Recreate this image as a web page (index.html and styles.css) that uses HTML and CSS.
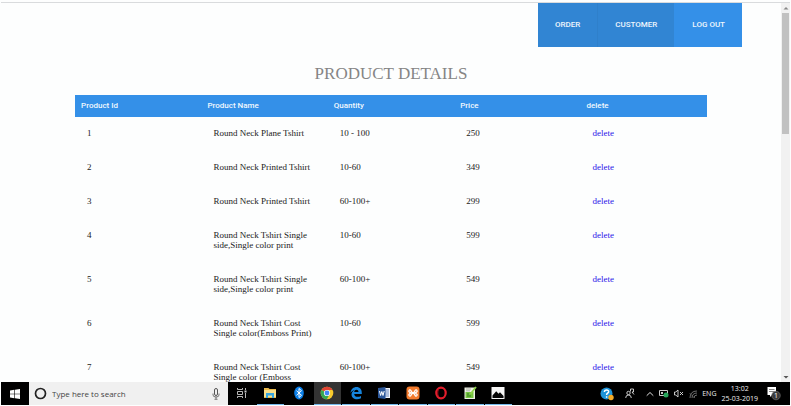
FILE: index.html
```html
<!DOCTYPE html>
<html lang="en">
<head>
<meta charset="utf-8">
<title>Product Details</title>
<link rel="stylesheet" href="styles.css">
</head>
<body>
<div class="window">
  <main class="page">
    <nav class="nav">
      <a class="nav-link" href="#order">ORDER</a>
      <a class="nav-link" href="#customer">CUSTOMER</a>
      <a class="nav-link nav-active" href="#logout">LOG OUT</a>
    </nav>
    <h1 class="title">PRODUCT DETAILS</h1>
    <table class="products">
      <thead>
        <tr><th>Product Id</th><th>Product Name</th><th>Quantity</th><th>Price</th><th>delete</th></tr>
      </thead>
      <tbody>
        <tr><td>1</td><td>Round Neck Plane Tshirt</td><td>10 - 100</td><td>250</td><td><a href="#d1">delete</a></td></tr>
        <tr><td>2</td><td>Round Neck Printed Tshirt</td><td>10-60</td><td>349</td><td><a href="#d2">delete</a></td></tr>
        <tr><td>3</td><td>Round Neck Printed Tshirt</td><td>60-100+</td><td>299</td><td><a href="#d3">delete</a></td></tr>
        <tr><td>4</td><td>Round Neck Tshirt Single<br>side,Single color print</td><td>10-60</td><td>599</td><td><a href="#d4">delete</a></td></tr>
        <tr><td>5</td><td>Round Neck Tshirt Single<br>side,Single color print</td><td>60-100+</td><td>549</td><td><a href="#d5">delete</a></td></tr>
        <tr><td>6</td><td>Round Neck Tshirt Cost<br>Single color(Emboss Print)</td><td>10-60</td><td>599</td><td><a href="#d6">delete</a></td></tr>
        <tr><td>7</td><td>Round Neck Tshirt Cost<br>Single color (Emboss</td><td>60-100+</td><td>549</td><td><a href="#d7">delete</a></td></tr>
      </tbody>
    </table>
  </main>
  <div class="scrollbar" aria-hidden="true">
    <svg class="arrow" viewBox="0 0 8 8"><path d="M1.5 5.5 4 3l2.500 2.500z" fill="#888"/></svg>
    <div class="thumb"></div>
    <svg class="arrow arrow-down" viewBox="0 0 8 8"><path d="M1.500 3 4 5.500 6.500 3z" fill="#555"/></svg>
  </div>
</div>
<footer class="taskbar">
  <button class="start" aria-label="Start"><svg width="10" height="10" viewBox="0 0 10 10"><path d="M0 1.400 4.400.8v3.900H0zM5 .7 10 0v4.700H5zM0 5.300h4.400v3.900L0 8.600zM5 5.300h5V10l-5-.7z" fill="#fff"/></svg></button>
  <div class="search">
    <svg width="13" height="13" viewBox="0 0 13 13"><circle cx="6.500" cy="6.500" r="5" fill="none" stroke="#222" stroke-width="1.700"/></svg>
    <input class="search-input" type="text" aria-label="Search" placeholder="Type here to search">
    <svg width="8" height="12" viewBox="0 0 8 12" fill="none" stroke="#555"><rect x="2.500" y=".5" width="3" height="7" rx="1.500"/><path d="M1 5.500v1.500q0 2 3 2t3-2V5.500M4 9v2M2.500 11.300h3" stroke-width=".8"/></svg>
  </div>
  <div class="apps">
    <button class="app" aria-label="Task view"><svg viewBox="0 0 14 14" fill="none" stroke="#ccc"><path d="M2.500 2v1.500h5V2M2.500 12v-1.500h5V12M2.500 5.500h5v3h-5zM10.500 2v2M10.500 7v5" stroke-width=".9"/><path d="M9.500 4.500h2v2h-2z" fill="#ccc" stroke="none"/></svg></button>
    <button class="app open" aria-label="File Explorer"><svg viewBox="0 0 14 14"><path d="M1 2h4.500l1 1H13v9H1z" fill="#e9b94b"/><path d="M1 4h12v7H1z" fill="#fbe08a"/><path d="M3 7h8v5H9V9.500H5V12H3z" fill="#39a6e0"/></svg></button>
    <button class="app" aria-label="Bluetooth"><svg viewBox="0 0 14 14"><ellipse cx="7" cy="7" rx="4.800" ry="6.500" fill="#0b7fe8"/><path d="m4.500 4.700 5 4.600L7 11.500v-9l2.500 2.200-5 4.600" fill="none" stroke="#fff"/></svg></button>
    <button class="app open current" aria-label="Chrome"><svg viewBox="0 0 14 14"><circle cx="7" cy="7" r="6.300" fill="#f7ca2d"/><path d="M7 7 1.500 3.900A6.300 6.300 0 0 1 12.500 4H7z" fill="#e14435"/><path d="M7 7 1.500 3.900A6.300 6.300 0 0 0 6.800 13.300L9.600 8.500z" fill="#36a853"/><circle cx="7" cy="7" r="3.100" fill="#fff"/><circle cx="7" cy="7" r="2.400" fill="#4286f5"/></svg></button>
    <button class="app open" aria-label="Edge"><svg viewBox="0 0 14 14"><path d="M1.500 7C2 3 4.500 1 7.500 1c3.600 0 5.500 2.500 5.300 6.900H5.200c.2 3.400 4.200 3.600 6.800 2v2.400C7.500 14.500 2.500 12.800 2.500 8.500c0-2 1.200-3.500 3-4.300C3.500 4.400 2.300 5.500 1.500 7zm3.700-1h4.300c0-3.200-4-3-4.300 0z" fill="#1684dc"/></svg></button>
    <button class="app open" aria-label="Word"><svg viewBox="0 0 14 14"><path d="M7 2h6v10H7z" fill="#f2f5fb"/><path d="M8 4h4M8 6h4M8 8h4M8 10h4" stroke="#315da8" stroke-width=".7"/><path d="m1 2 7.500-1v12L1 12z" fill="#2b579a"/><path d="m2.500 5 1.100 4.500L4.800 5.500 6 9.500 7.200 5" fill="none" stroke="#fff"/></svg></button>
    <button class="app open" aria-label="XAMPP"><svg viewBox="0 0 14 14"><rect x=".5" y=".5" width="13" height="13" rx="3" fill="#f37b2d"/><path d="M3 4.500c1-1.500 2 0 2.500 1.200L7 7l1.500-1.300C9 4.500 10 3 11 4.500S9 7 9 7s3 1 2 2.500-2 0-2.500-1.200L7 7 5.500 8.300C5 9.500 4 11 3 9.500S5 7 5 7 2 6 3 4.500z" fill="none" stroke="#fff" stroke-width="1.300"/></svg></button>
    <button class="app open" aria-label="Opera"><svg viewBox="0 0 14 14"><ellipse cx="7" cy="7" rx="4.700" ry="5.300" fill="none" stroke="#e21d2b" stroke-width="2.200"/><path d="M4.500 3.500C3.500 5 3.500 9 4.500 10.500" fill="none" stroke="#a70e1c"/></svg></button>
    <button class="app open" aria-label="Notepad++"><svg viewBox="0 0 14 14"><path d="M1.500 1.500H12v11.500H1.500z" fill="#eef3e6"/><path d="M2.500 6h8v6h-8z" fill="#77c442"/><path d="M3 3h5M3 4.800h4" stroke="#888" stroke-width=".6"/><path d="m13 1-5.500 7" stroke="#8ed348" stroke-width="1.800"/><path d="M4 8h2M4 10h4" stroke="#32761c"/></svg></button>
    <button class="app open" aria-label="Photos"><svg viewBox="0 0 14 14"><path d="M.5 1h13v12H.5z" fill="#f5f5f5"/><path d="M1.500 12V9.500l3.700-4.200 2.300 2.400 1.500-1.400 3.500 3.700v2z" fill="#050505"/></svg></button>
  </div>
  <div class="tray">
    <svg width="14" height="14" viewBox="0 0 14 14"><circle cx="6.500" cy="6.500" r="6" fill="#1e94d8"/><path d="M4.400 5c0-3 4.700-2.600 4.200 0-.3 1.300-2 1.200-2 3M6.600 9.300v1.400" fill="none" stroke="#fff" stroke-width="1.500"/><circle cx="11" cy="10.500" r="2.700" fill="#f5ab28"/></svg>
    <svg class="people" width="10" height="11" viewBox="0 0 10 11" fill="none" stroke="#ddd" stroke-width=".9"><circle cx="3.500" cy="5" r="1.700"/><path d="M.7 10q0-3 2.800-3t2.800 3M5.500 3.500V1h3v3H7M7 4l2 2.500"/></svg>
    <svg width="8" height="6" viewBox="0 0 8 6"><path d="m.7 4.700 3.300-3.200 3.300 3.200" fill="none" stroke="#ddd"/></svg>
    <svg width="10" height="9" viewBox="0 0 10 9"><path d="M.5 1.500h8v5h-8z" fill="none" stroke="#ccc"/><path d="M2 3h2v2H2z" fill="#ccc"/><circle cx="7" cy="6" r="2.500" fill="#26a65a"/></svg>
    <svg width="10" height="9" viewBox="0 0 10 9"><path d="M.5 3h1.300L4 1v7L1.800 6H.5zM6 3l3 3M9 3 6 6" fill="none" stroke="#ddd" stroke-width=".9"/></svg>
    <svg width="8" height="8" viewBox="0 0 8 8"><path d="M1 8q0-7 7-7M3 8q0-5 5-5M5 8q0-3 3-3" fill="none" stroke="#888" stroke-width=".8"/><path d="m.5 3 5 5" stroke="#777" stroke-width=".6"/></svg>
    <span>ENG</span>
    <div class="clock"><span>13:02</span><span>25-03-2019</span></div>
    <button class="notify" aria-label="Notifications"><svg width="14" height="15" viewBox="0 0 14 15"><path d="M.5 1H9v8H5l-2 2V9H.5z" fill="#fff"/><path d="M2 3.500h5.500M2 5.500h5.500" stroke="#555" stroke-width=".7"/><circle cx="9" cy="9.500" r="4.300" fill="#3a3a3a" stroke="#777" stroke-width=".6"/></svg><span class="badge">1</span></button>
  </div>
</footer>
</body>
</html>
```
FILE: styles.css
```css
* { box-sizing: border-box; }
body {
  margin: 0;
  height: 100vh;
  padding: 2px 1px 1px;
  display: flex;
  flex-direction: column;
  background: #fdfefe;
  font-family: "Liberation Serif", serif;
}
button { border: 0; padding: 0; background: none; }
svg { display: block; flex: none; }

.window {
  flex: 1;
  min-height: 0;
  display: flex;
  border-top: 1px solid #d9dbdd;
}
.page { flex: 1; min-width: 0; overflow: hidden; }

.nav {
  display: flex;
  justify-content: flex-end;
  margin-right: 39px;
}
.nav-link {
  padding: 0 17px;
  background: #3185d3;
  color: #eef6fd;
  font: 500 8px/44px Roboto, sans-serif;
  text-decoration: none;
}
.nav-link + .nav-link { border-left: 1px solid #2f80cb; }
.nav-link.nav-active { background: #3490e8; border-color: #3490e8; }

.title {
  margin: 17px 0 11px;
  color: #858585;
  font-size: 17px;
  font-weight: 400;
  line-height: 20px;
  text-align: center;
}

.products {
  width: 81%;
  margin: 0 auto;
  table-layout: fixed;
  border-collapse: collapse;
  color: #222;
  font-size: 9px;
  line-height: 10px;
}
.products th {
  padding: 5px 6px;
  background: #3490e8;
  color: #f2f8fe;
  font: 500 8px/12px Roboto, sans-serif;
  text-align: left;
}
.products td {
  padding: 11px 12px 13px;
  vertical-align: top;
  white-space: nowrap;
}
.products a { color: #2a14e8; text-decoration: none; }

.scrollbar {
  width: 9px;
  display: flex;
  flex-direction: column;
  align-items: center;
  background: #f1f1f1;
}
.arrow { width: 8px; height: 10px; }
.thumb { width: 7px; height: 32%; background: #c1c1c1; }
.arrow-down { margin-top: auto; }

.taskbar {
  height: 23px;
  flex: none;
  display: flex;
  background: #000;
  color: #eee;
  font: 7px/10px "Open Sans", sans-serif;
}
.start { width: 28px; display: grid; place-items: center; }
.search {
  width: 199px;
  display: flex;
  align-items: center;
  gap: 5px;
  padding: 0 8px 0 5px;
  background: #f0f0f0;
}
.search-input {
  flex: 1;
  min-width: 0;
  border: 0;
  padding: 0;
  background: none;
  font: 8px/12px "Open Sans", sans-serif;
}
.search-input::placeholder { color: #444; opacity: 1; }
.apps { width: 36%; display: flex; gap: 1px; }
.app {
  flex: 1;
  display: grid;
  place-items: center;
  border-bottom: 1px solid transparent;
}
.app svg { width: 14px; height: 14px; }
.open { border-color: #76b9ed; }
.current { background: #333; }
.tray {
  margin-left: auto;
  display: flex;
  align-items: center;
  gap: 5px;
  padding-right: 9px;
}
.people { margin: 0 6px; }
.clock {
  display: flex;
  flex-direction: column;
  align-items: center;
}
.notify { position: relative; margin-left: 4px; }
.badge {
  position: absolute;
  left: 7px;
  top: 5px;
  color: #fff;
  font: 7px/9px "Open Sans", sans-serif;
}
```
